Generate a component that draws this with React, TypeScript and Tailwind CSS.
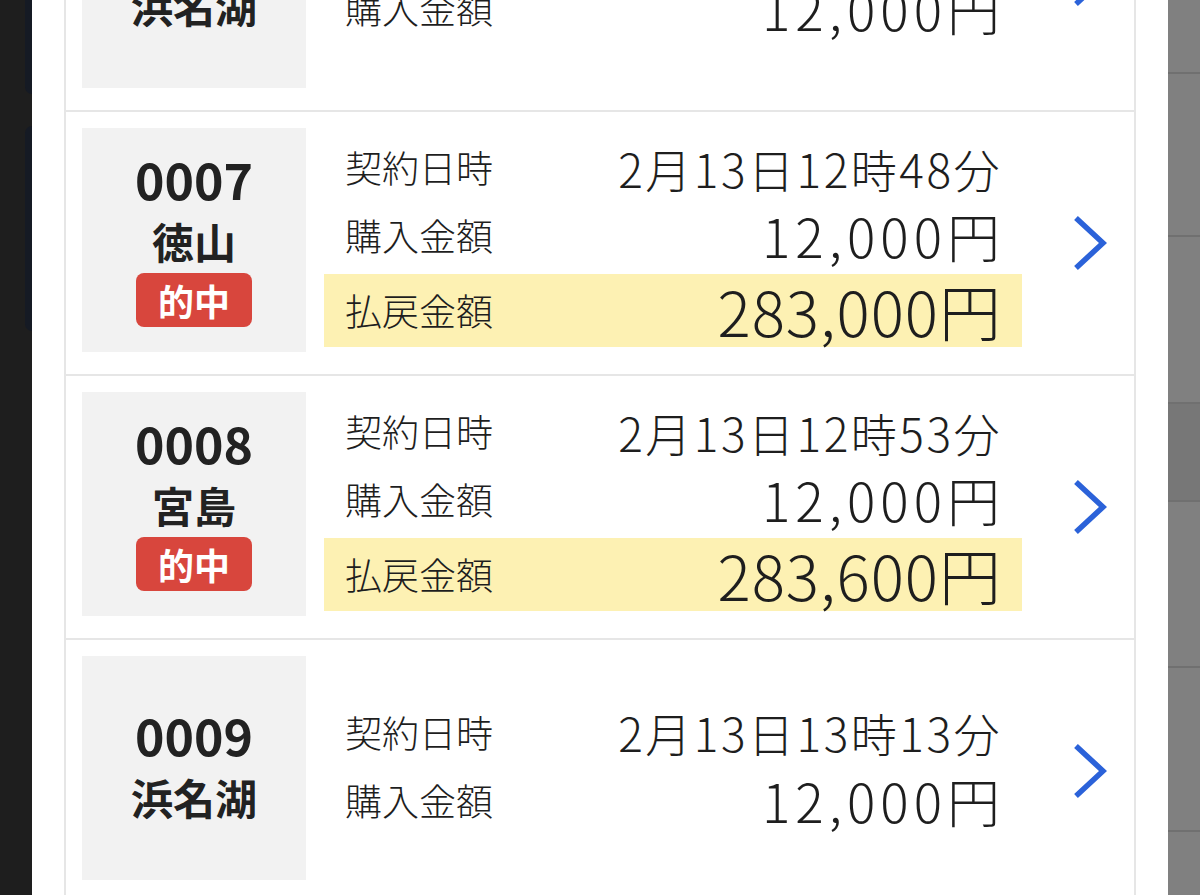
import React from "react";

interface Ticket {
  no: string;
  place: string;
  hit?: boolean;
  date: string;
  amount: string;
  payout?: string;
}

const tickets: Ticket[] = [
  { no: "0006", place: "浜名湖", date: "2月13日12時43分", amount: "12,000円" },
  { no: "0007", place: "徳山", hit: true, date: "2月13日12時48分", amount: "12,000円", payout: "283,000円" },
  { no: "0008", place: "宮島", hit: true, date: "2月13日12時53分", amount: "12,000円", payout: "283,600円" },
  { no: "0009", place: "浜名湖", date: "2月13日13時13分", amount: "12,000円" },
];

const Chevron = () => (
  <svg width="34" height="56" viewBox="0 0 34 56" fill="none">
    <polyline points="3,3 30,28 3,53" stroke="#2b62d9" strokeWidth="5.5" strokeLinejoin="miter" />
  </svg>
);

const TicketCard = ({ t }: { t: Ticket }) => (
  <div className="flex border-b-2 border-[#e6e6e6] pt-[16px] pb-[22px] pl-[16px]">
    {/* race number + place */}
    <div className="flex h-[224px] w-[224px] shrink-0 flex-col items-center justify-center bg-[#f2f2f2] text-[#222]">
      <div className="mb-[8px] text-[50px] font-bold leading-[50px]">{t.no}</div>
      <div className="text-[42px] font-bold leading-[60px]">{t.place}</div>
      {t.hit && (
        <div className="mt-[2px] rounded-[8px] bg-[#d8463d] px-[22px] text-[36px] font-bold leading-[54px] text-white">
          的中
        </div>
      )}
    </div>

    {/* detail rows */}
    <div className="ml-[18px] flex flex-1 flex-col justify-center font-light text-[#1e1e1e]">
      <div className="flex h-[68px] items-center justify-between pl-[21px] pr-[22px]">
        <span className="text-[37px] leading-none">契約日時</span>
        <span className="mr-[-2px] text-[46px] leading-none tracking-[2.5px]">{t.date}</span>
      </div>
      <div className="flex h-[72px] items-center justify-between pl-[21px] pr-[22px] pb-[4px]">
        <span className="text-[37px] leading-none">購入金額</span>
        <span className="mr-[-5px] text-[53px] leading-none tracking-[5px]">{t.amount}</span>
      </div>
      {t.payout && (
        <div className="flex h-[73px] items-center justify-between bg-[#fdf1b3] pl-[21px] pr-[22px]">
          <span className="text-[37px] leading-none">払戻金額</span>
          <span className="mr-[-2px] text-[62px] leading-none tracking-[1px]">{t.payout}</span>
        </div>
      )}
    </div>

    {/* link arrow */}
    <div className="flex w-[112px] shrink-0 items-center pl-[51px] pt-[5px]">
      <Chevron />
    </div>
  </div>
);

export default function App() {
  return (
    <div className="flex h-[895px] w-[1200px] overflow-hidden bg-[#1e1e1e] font-['Hiragino_Sans','Noto_Sans_CJK_JP',sans-serif]">
      {/* background page peeking on the left */}
      <div className="flex w-[32px] shrink-0 flex-col pl-[25px]">
        <div className="h-[94px] rounded-bl-[8px] bg-[#151a24]" />
        <div className="mt-[32px] h-[205px] rounded-l-[8px] bg-[#151a24]" />
      </div>

      {/* modal sheet */}
      <div className="w-[1136px] shrink-0 overflow-hidden bg-white px-[32px]">
        <div className="mt-[-152px] border-x-2 border-[#e6e6e6]">
          {tickets.map((t) => (
            <TicketCard key={t.no} t={t} />
          ))}
        </div>
      </div>

      {/* dimmed background on the right */}
      <div className="flex w-[32px] shrink-0 flex-col bg-[#808080]">
        <div className="h-[74px] shrink-0 border-b-2 border-[#707070]" />
        <div className="h-[163px] shrink-0 border-b-2 border-[#707070]" />
        <div className="h-[165px] shrink-0" />
        <div className="h-[100px] shrink-0 border-y-2 border-[#707070] bg-[#777777]" />
        <div className="h-[166px] shrink-0 border-b-2 border-[#707070]" />
        <div className="h-[164px] shrink-0 border-b-2 border-[#707070]" />
      </div>
    </div>
  );
}
